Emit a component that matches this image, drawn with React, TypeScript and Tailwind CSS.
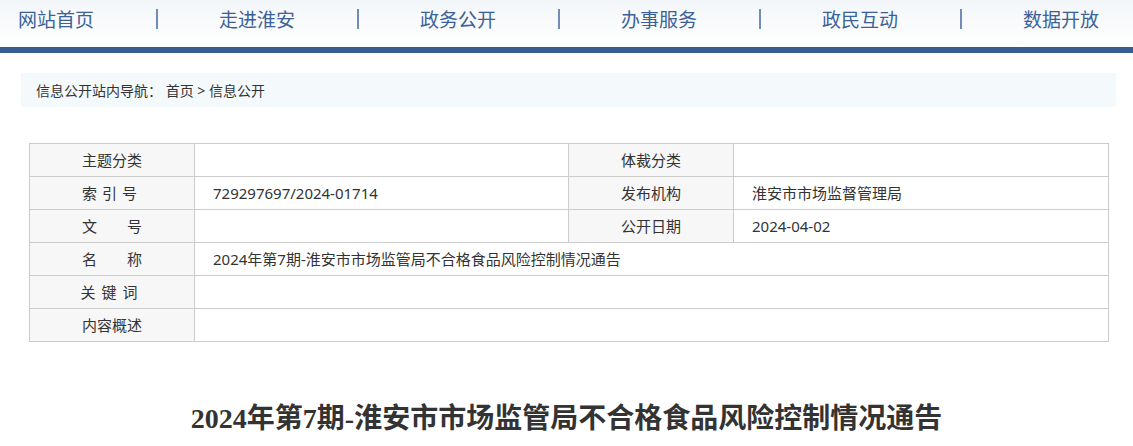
const navItems = ['网站首页', '走进淮安', '政务公开', '办事服务', '政民互动', '数据开放'];

function Label({ children }: { children: React.ReactNode }) {
  return (
    <td className="border border-[#cccccc] bg-[#f7f7f7] text-center align-middle">
      {children}
    </td>
  );
}

function Value({ children, colSpan }: { children?: React.ReactNode; colSpan?: number }) {
  return (
    <td colSpan={colSpan} className="border border-[#cccccc] pl-[18px] align-middle whitespace-nowrap">
      {children}
    </td>
  );
}

export default function App() {
  return (
    <div className="min-h-screen bg-white text-[#333333]" style={{ fontFamily: '"Noto Sans", "Noto Sans CJK SC", sans-serif' }}>
      <div className="h-[47px] bg-gradient-to-b from-[#f3f6f9] to-white">
        <ul
          className="flex items-center gap-[61px] pl-[18px] pt-[6px] text-[19px] leading-[26px] text-[#3b6198]"
          style={{ fontFamily: '"Noto Sans CJK SC", sans-serif' }}
        >
          {navItems.map((item, i) => (
            <li key={item} className="flex items-center gap-[61px]">
              {i > 0 && <span className="h-[20px] w-[2px] bg-[#6f8dbb]" />}
              <span className="w-[77px] whitespace-nowrap">{item}</span>
            </li>
          ))}
        </ul>
      </div>
      <div className="h-[6px] bg-[#365e92]" />

      <div className="ml-[21px] mt-[20px] w-[1095px]">
        <div className="flex h-[34px] items-center whitespace-pre bg-[#f4f9fc] pl-[15px] text-[14px]">
          信息公开站内导航： 首页 &gt; 信息公开
        </div>

        <table className="mx-[8px] mt-[36px] w-[1079px] table-fixed border-collapse text-[15px] [&_tr]:h-[33px]">
          <colgroup>
            <col className="w-[165px]" />
            <col className="w-[374px]" />
            <col className="w-[165px]" />
            <col className="w-[375px]" />
          </colgroup>
          <tbody>
            <tr>
              <Label>主题分类</Label>
              <Value />
              <Label>体裁分类</Label>
              <Value />
            </tr>
            <tr>
              <Label><span className="tracking-[5px]">索引号</span></Label>
              <Value>729297697/2024-01714</Value>
              <Label>发布机构</Label>
              <Value>淮安市市场监督管理局</Value>
            </tr>
            <tr>
              <Label>
                <span className="inline-flex gap-[30px]"><span>文</span><span>号</span></span>
              </Label>
              <Value />
              <Label>公开日期</Label>
              <Value>2024-04-02</Value>
            </tr>
            <tr>
              <Label>
                <span className="inline-flex gap-[30px]"><span>名</span><span>称</span></span>
              </Label>
              <Value colSpan={3}>2024年第7期-淮安市市场监管局不合格食品风险控制情况通告</Value>
            </tr>
            <tr>
              <Label><span className="tracking-[6px]">关键词</span></Label>
              <Value colSpan={3} />
            </tr>
            <tr>
              <Label>内容概述</Label>
              <Value colSpan={3} />
            </tr>
          </tbody>
        </table>
      </div>

      <h1
        className="mt-[59px] text-center text-[28px] font-bold leading-[36px] text-[#333333]"
        style={{ fontFamily: '"Liberation Serif", "Noto Sans CJK SC", serif' }}
      >
        2024年第7期-淮安市市场监管局不合格食品风险控制情况通告
      </h1>
    </div>
  );
}
